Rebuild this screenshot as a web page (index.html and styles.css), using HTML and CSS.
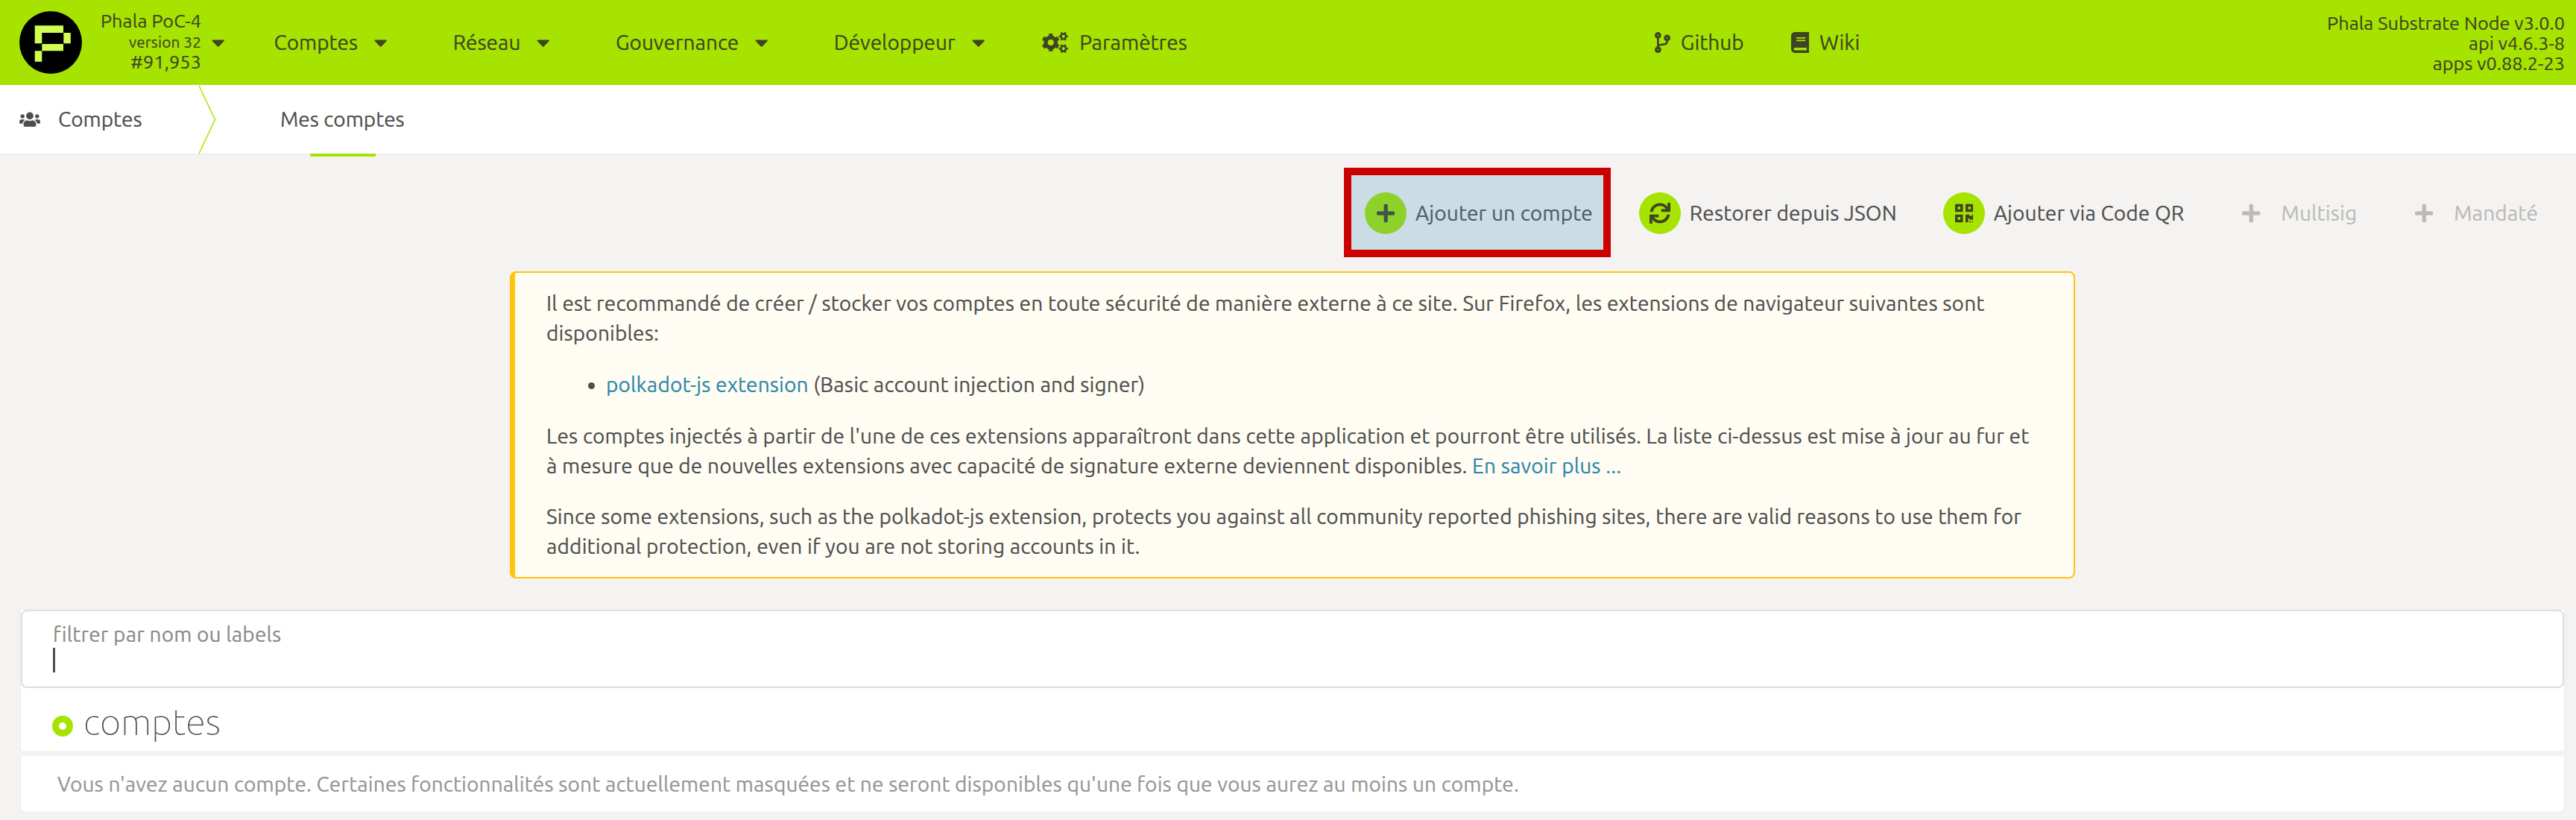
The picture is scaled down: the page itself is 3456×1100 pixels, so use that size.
FILE: index.html
```html
<!DOCTYPE html>
<html lang="fr">
<head>
<meta charset="utf-8">
<title>Comptes</title>
<link rel="stylesheet" href="styles.css">
</head>
<body>
<svg class="sprite" aria-hidden="true">
  <symbol id="caret" viewBox="0 0 320 512"><path d="M31.3 192h257.3c17.8 0 26.7 21.5 14.1 34.1L174.1 354.8c-7.8 7.8-20.5 7.8-28.3 0L17.2 226.1C4.6 213.5 13.5 192 31.3 192z"/></symbol>
  <symbol id="plus" viewBox="0 0 448 512"><path d="M416 208H272V64c0-17.67-14.33-32-32-32h-32c-17.67 0-32 14.33-32 32v144H32c-17.67 0-32 14.33-32 32v32c0 17.67 14.33 32 32 32h144v144c0 17.67 14.33 32 32 32h32c17.67 0 32-14.33 32-32V304h144c17.67 0 32-14.33 32-32v-32c0-17.67-14.33-32-32-32z"/></symbol>
</svg>

<header class="topbar">
  <svg class="logo" viewBox="0 0 84 84">
    <circle cx="42" cy="42" r="42" fill="#000"/>
    <path fill="#d1ff52" d="M20.7 19.3H59V29H30.3V43.3H20.7zM59.3 29h9.5v14.3h-9.5zM30.3 44H59v9.3H30.3zM20.7 53.3h9.6v14.4h-9.6z"/>
  </svg>
  <div class="chain">
    <div>Phala PoC-4</div>
    <div class="chain-version">version 32</div>
    <div>#91,953</div>
  </div>
  <svg class="caret chain-caret"><use href="#caret"/></svg>
  <nav class="menu">
    <a class="menu-item">Comptes<svg class="caret"><use href="#caret"/></svg></a>
    <a class="menu-item">Réseau<svg class="caret"><use href="#caret"/></svg></a>
    <a class="menu-item">Gouvernance<svg class="caret"><use href="#caret"/></svg></a>
    <a class="menu-item">Développeur<svg class="caret"><use href="#caret"/></svg></a>
    <a class="menu-item settings">
      <svg class="cogs" viewBox="0 0 35 28">
        <g fill="none" stroke="currentColor">
          <circle cx="11.7" cy="14" r="6.8" stroke-width="5.4"/>
          <circle cx="11.7" cy="14" r="10.3" stroke-width="3.4" pathLength="12" stroke-dasharray="1 1" stroke-dashoffset="-.5"/>
          <circle cx="28.7" cy="5.8" r="3.4" stroke-width="2.6"/>
          <circle cx="28.7" cy="5.8" r="5" stroke-width="2" pathLength="12" stroke-dasharray="1 1" stroke-dashoffset=".5"/>
          <circle cx="28.7" cy="22.2" r="3.4" stroke-width="2.6"/>
          <circle cx="28.7" cy="22.2" r="5" stroke-width="2" pathLength="12" stroke-dasharray="1 1" stroke-dashoffset=".5"/>
        </g>
      </svg>Paramètres</a>
  </nav>
  <nav class="links">
    <a class="link-item"><svg class="branch" viewBox="0 0 384 512"><path d="M384 144c0-44.2-35.8-80-80-80s-80 35.8-80 80c0 36.4 24.3 67.1 57.5 76.8-.6 16.1-4.2 28.5-11 36.9-15.4 19.2-49.3 22.4-85.2 25.7-28.2 2.6-57.4 5.4-81.3 16.9v-144c32.5-10.2 56-40.5 56-76.3 0-44.2-35.8-80-80-80S0 35.8 0 80c0 35.8 23.5 66.1 56 76.3v199.3C23.5 365.9 0 396.2 0 432c0 44.2 35.8 80 80 80s80-35.8 80-80c0-34-21.2-63.1-51.2-74.6 3.1-5.2 7.8-9.8 14.9-13.4 16.2-8.2 40.4-10.4 66.1-12.8 42.2-3.9 90-8.4 118.2-43.4 14-17.4 21.1-39.8 21.6-67.9 31.6-10.8 54.4-40.7 54.4-75.9zM80 64c8.8 0 16 7.2 16 16s-7.2 16-16 16-16-7.2-16-16 7.2-16 16-16zm0 384c-8.8 0-16-7.2-16-16s7.2-16 16-16 16 7.2 16 16-7.2 16-16 16zm224-320c8.8 0 16 7.2 16 16s-7.2 16-16 16-16-7.2-16-16 7.2-16 16-16z"/></svg>Github</a>
    <a class="link-item"><svg class="book" viewBox="0 0 448 512"><path d="M448 360V24c0-13.3-10.7-24-24-24H96C43 0 0 43 0 96v320c0 53 43 96 96 96h328c13.3 0 24-10.7 24-24v-16c0-7.5-3.5-14.3-8.9-18.7-4.2-15.4-4.2-59.3 0-74.7 5.4-4.3 8.9-11.1 8.9-18.6zM128 134c0-3.3 2.7-6 6-6h212c3.3 0 6 2.7 6 6v20c0 3.3-2.7 6-6 6H134c-3.3 0-6-2.7-6-6v-20zm0 64c0-3.3 2.7-6 6-6h212c3.3 0 6 2.7 6 6v20c0 3.3-2.7 6-6 6H134c-3.3 0-6-2.7-6-6v-20zm253.4 250H96c-17.7 0-32-14.3-32-32 0-17.6 14.4-32 32-32h285.4c-1.9 17.1-1.9 46.9 0 64z"/></svg>Wiki</a>
  </nav>
  <div class="versions">
    <div>Phala Substrate Node v3.0.0</div>
    <div>api v4.6.3-8</div>
    <div>apps v0.88.2-23</div>
  </div>
</header>

<div class="tabs">
  <div class="tabs-title">
    <svg class="users" viewBox="0 0 640 512"><path d="M96 224c35.3 0 64-28.7 64-64s-28.7-64-64-64-64 28.7-64 64 28.7 64 64 64zm448 0c35.3 0 64-28.7 64-64s-28.7-64-64-64-64 28.7-64 64 28.7 64 64 64zm32 32h-64c-17.6 0-33.5 7.1-45.1 18.6 40.3 22.1 68.9 62 75.1 109.4h66c17.7 0 32-14.3 32-32v-32c0-35.3-28.7-64-64-64zm-256 0c61.9 0 112-50.1 112-112S381.9 32 320 32 208 82.1 208 144s50.1 112 112 112zm76.8 32h-8.3c-20.8 10-43.9 16-68.5 16s-47.6-6-68.5-16h-8.3C179.6 288 128 339.6 128 403.2V432c0 26.5 21.5 48 48 48h288c26.5 0 48-21.5 48-48v-28.8c0-63.6-51.6-115.2-115.2-115.2zm-223.7-13.4C161.5 263.1 145.6 256 128 256H64c-35.3 0-64 28.7-64 64v32c0 17.7 14.3 32 32 32h65.9c6.3-47.4 34.9-87.3 75.2-109.4z"/></svg>
    <span>Comptes</span>
  </div>
  <svg class="chevron" viewBox="0 0 24 92"><path d="M1 1L22.5 46.5L1 92" fill="none" stroke="#a6e400" stroke-width="1.5"/></svg>
  <div class="tab">Mes comptes</div>
</div>

<main class="content">
  <div class="actions">
    <a class="action marked"><span class="disc"><svg class="i-plus"><use href="#plus"/></svg></span>Ajouter un compte</a>
    <a class="action"><span class="disc"><svg class="i-sync" viewBox="0 0 512 512"><path d="M440.65 12.57l4 82.77A247.16 247.16 0 0 0 255.83 8C134.73 8 33.91 94.92 12.29 209.82A12 12 0 0 0 24.09 224h49.05a12 12 0 0 0 11.67-9.26 175.91 175.91 0 0 1 317-56.94l-101.46-4.86a12 12 0 0 0-12.57 12v47.41a12 12 0 0 0 12 12H500a12 12 0 0 0 12-12V12a12 12 0 0 0-12-12h-47.37a12 12 0 0 0-11.98 12.57zM255.83 432a175.61 175.61 0 0 1-146-77.8l101.8 4.87a12 12 0 0 0 12.57-12v-47.4a12 12 0 0 0-12-12H12a12 12 0 0 0-12 12V500a12 12 0 0 0 12 12h47.35a12 12 0 0 0 12-12.6l-4.15-82.57A247.17 247.17 0 0 0 255.83 504c121.11 0 221.93-86.92 243.55-201.82a12 12 0 0 0-11.8-14.18h-49.05a12 12 0 0 0-11.67 9.26A175.86 175.86 0 0 1 255.83 432z"/></svg></span>Restorer depuis JSON</a>
    <a class="action"><span class="disc"><svg class="i-plus" viewBox="0 0 448 512"><path d="M0 224h192V32H0v192zM64 96h64v64H64V96zm192-64v192h192V32H256zm128 128h-64V96h64v64zM0 480h192V288H0v192zm64-128h64v64H64v-64zm352-64h32v128h-96v-32h-32v96h-64V288h96v32h64v-32zm0 160h32v32h-32v-32zm-64 0h32v32h-32v-32z"/></svg></span>Ajouter via Code QR</a>
    <a class="action disabled"><span class="disc"><svg class="i-plus"><use href="#plus"/></svg></span>Multisig</a>
    <a class="action disabled"><span class="disc"><svg class="i-plus"><use href="#plus"/></svg></span>Mandaté</a>
  </div>

  <article class="notice">
    <p>Il est recommandé de créer / stocker vos comptes en toute sécurité de manière externe à ce site. Sur Firefox, les extensions de navigateur suivantes sont<br>disponibles:</p>
    <ul><li><a>polkadot-js extension</a> (Basic account injection and signer)</li></ul>
    <p>Les comptes injectés à partir de l'une de ces extensions apparaîtront dans cette application et pourront être utilisés. La liste ci-dessus est mise à jour au fur et<br>à mesure que de nouvelles extensions avec capacité de signature externe deviennent disponibles. <a>En savoir plus ...</a></p>
    <p>Since some extensions, such as the polkadot-js extension, protects you against all community reported phishing sites, there are valid reasons to use them for<br>additional protection, even if you are not storing accounts in it.</p>
  </article>

  <section class="accounts">
    <div class="filter">
      <label>filtrer par nom ou labels</label>
      <div class="cursor"></div>
    </div>
    <h1 class="heading"><span class="ring"></span>comptes</h1>
  </section>
  <div class="empty">Vous n'avez aucun compte. Certaines fonctionnalités sont actuellement masquées et ne seront disponibles qu'une fois que vous aurez au moins un compte.</div>
</main>
</body>
</html>
```
FILE: styles.css
```css
* { box-sizing: border-box; }

body {
  margin: 0;
  height: 1100px;
  overflow: hidden;
  background: #f4f3f1;
  color: #4e4e4e;
  font: 28px/40px Ubuntu, "Noto Sans", sans-serif;
  -webkit-text-stroke: .2px;
}

svg { display: block; flex: none; fill: currentColor; }
.sprite { display: none; }

/* Top bar */
.topbar {
  display: flex;
  align-items: center;
  height: 114px;
  padding: 0 15px 0 26px;
  background: #a6e400;
  color: #3f4424;
  white-space: nowrap;
}
.logo { width: 84px; height: 84px; }
.chain {
  width: 160px;
  padding-bottom: 1px;
  font-size: 25.2px;
  line-height: 27.4px;
  letter-spacing: .12px;
  text-align: right;
}
.chain-version { font-size: 20.8px; }
.caret { width: 17.5px; height: 28px; }
.chain-caret { margin-left: 14px; }
.menu { display: flex; gap: 88px; margin-left: 66px; }
.menu-item { display: flex; align-items: center; gap: 22px; }
.settings { gap: 15px; margin-left: -11px; }
.cogs { width: 35px; height: 28px; }
.links { display: flex; gap: 63px; margin-left: 627px; }
.link-item { display: flex; align-items: center; gap: 14px; }
.branch { width: 21px; height: 28px; }
.book { width: 24.5px; height: 28px; }
.versions {
  margin-left: auto;
  padding-top: 3px;
  font-size: 25.2px;
  line-height: 27px;
  letter-spacing: .06px;
  text-align: right;
}

/* Tabs */
.tabs {
  display: flex;
  height: 94px;
  background: #fff;
  border-bottom: 2px solid #eee;
}
.tabs-title { display: flex; align-items: center; gap: 24px; width: 266px; padding-left: 26px; }
.users { width: 28px; height: 22.4px; }
.chevron { width: 24px; height: 92px; }
.tab {
  display: flex;
  align-items: center;
  position: relative;
  margin-left: 86px;
  height: 92px;
}
.tab::after {
  content: "";
  position: absolute;
  left: 40px;
  bottom: -4px;
  width: 88px;
  height: 4px;
  background: #a6e400;
}

/* Action buttons */
.actions {
  display: flex;
  justify-content: flex-end;
  align-items: center;
  gap: 62px;
  height: 156px;
  padding-right: 51px;
  letter-spacing: .14px;
}
.action { display: flex; align-items: center; gap: 12px; position: relative; }
.disc {
  display: flex;
  align-items: center;
  justify-content: center;
  width: 56px;
  height: 56px;
  border-radius: 50%;
  background: #a6e400;
  color: #3f4424;
}
.i-plus { width: 24.5px; height: 28px; }
.i-sync { width: 28px; height: 28px; }
.disabled, .disabled .disc { color: #bbbab8; }
.disabled .disc { background: none; }
.marked::after {
  content: "";
  position: absolute;
  left: -28px;
  right: -24px;
  top: -33px;
  bottom: -31px;
  border: 10px solid #c00;
  background: rgba(65, 146, 188, .228);
  background-clip: padding-box;
}

/* Notice */
.notice {
  width: 2100px;
  height: 412px;
  margin-left: 684px;
  padding: 21px 42px 0;
  border: 2px solid #ffc40c;
  border-left-width: 7px;
  border-radius: 8px;
  background: #fffdf3;
  letter-spacing: .16px;
  white-space: nowrap;
}
.notice p { margin: 0 0 28px; }
.notice ul { margin: 29px 0; padding-left: 80px; }
.notice a { color: #2e86ab; }

/* Account list */
.accounts {
  height: 189px;
  margin: 42px 14px 0 26px;
  border: solid #f0efee;
  border-width: 0 2px;
  background: #fff;
}
.filter {
  height: 105px;
  padding: 11px 41px 0;
  border: 2px solid #dededd;
  border-radius: 8px;
  color: #8a8a8a;
  letter-spacing: .15px;
}
.filter label { display: block; height: 38px; }
.cursor { width: 3px; height: 33px; background: #4e4e4e; }
.heading {
  display: flex;
  align-items: center;
  gap: 14px;
  height: 84px;
  margin: 0;
  padding: 5px 0 0 42px;
  font-size: 49px;
  font-weight: 100;
  -webkit-text-stroke: 0;
}
.ring {
  width: 28px;
  height: 28px;
  margin-top: 12px;
  border: 9.5px solid #a6e400;
  border-radius: 50%;
}
.empty {
  display: flex;
  align-items: center;
  height: 77px;
  margin: 7px 14px 0 26px;
  padding-left: 49px;
  border: solid #f0efee;
  border-width: 0 2px 2px;
  border-radius: 0 0 8px 8px;
  background: #fff;
  color: #959595;
  letter-spacing: .14px;
  white-space: nowrap;
}
```
